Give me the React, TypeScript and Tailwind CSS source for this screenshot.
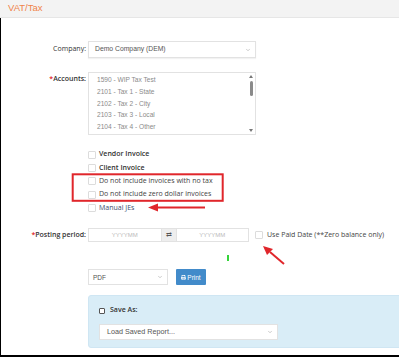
import { ChevronDown } from "lucide-react";
import { FaPrint } from "react-icons/fa";

const accounts = [
  "1590 - WIP Tax Test",
  "2101 - Tax 1 - State",
  "2102 - Tax 2 - City",
  "2103 - Tax 3 - Local",
  "2104 - Tax 4 - Other",
];

const options = [
  { label: "Vendor Invoice", cls: "font-semibold text-[#333]" },
  { label: "Client Invoice", cls: "font-semibold text-[#333]" },
  { label: "Do not include invoices with no tax", cls: "text-[#444]" },
  { label: "Do not include zero dollar invoices", cls: "text-[#444]" },
  { label: "Manual JEs", cls: "text-[#3d4c6e]" },
];

function Box({ className = "" }: { className?: string }) {
  return (
    <span
      className={`block shrink-0 rounded-[1px] border border-[#dcdcdc] bg-white ${className}`}
    />
  );
}

function Label({ children, required }: { children: string; required?: boolean }) {
  return (
    <div className="pr-[2px] text-right text-[7px] text-[#333]">
      {required && <span className="text-[#e0262b]">*</span>}
      {children}
    </div>
  );
}

export default function App() {
  return (
    <div className="relative h-[357px] w-[399px] overflow-hidden bg-white font-['Open_Sans',sans-serif]">
      <div className="flex h-[18px] items-start border-b border-[#e6e6e6] bg-[#f3f3f3] px-[8px] pt-[1px] font-['Liberation_Sans',sans-serif] text-[9.5px] text-[#f0834a]">
        VAT/Tax
      </div>

      <div className="flex h-[339px] flex-col border-b-2 border-l border-black">
        {/* company */}
        <div className="mt-[23px] grid grid-cols-[87px_168px] items-center">
          <Label>Company:</Label>
          <div className="flex h-[17px] items-center justify-between border border-[#e2e2e2] bg-white pl-[6px] pr-[4px] font-['Liberation_Sans',sans-serif] text-[6.8px] text-[#555] shadow-[0_1px_1px_rgba(0,0,0,0.05)]">
            Demo Company (DEM)
            <ChevronDown size={6} className="text-[#999]" />
          </div>
        </div>

        {/* accounts */}
        <div className="mt-[14px] grid grid-cols-[87px_168px] items-start">
          <div className="pt-[2px] font-semibold">
            <Label required>Accounts:</Label>
          </div>
          <div className="relative flex h-[63px] flex-col border border-[#e2e2e2] bg-white pl-[8px] pt-[1.5px] font-['Liberation_Sans',sans-serif] text-[6.6px] text-[#8a8a8a]">
            {accounts.map((a) => (
              <div key={a} className="flex h-[11.6px] items-center">
                {a}
              </div>
            ))}
            <div className="absolute right-[1px] top-0 flex h-full w-[6px] flex-col items-center justify-between py-[2px]">
              <span className="h-0 w-0 border-x-[2px] border-b-[3px] border-x-transparent border-b-[#777]" />
              <span className="mb-auto mt-[3px] h-[15px] w-[3px] rounded-full bg-[#8a8a8a]" />
              <span className="h-0 w-0 border-x-[2px] border-t-[3px] border-x-transparent border-t-[#777]" />
            </div>
          </div>
        </div>

        {/* checkboxes */}
        <div className="mt-[13px] flex flex-col pl-[87px]">
          {options.map((o) => (
            <div key={o.label} className="flex h-[13.3px] items-center gap-[3px]">
              <Box className="h-[8px] w-[8px]" />
              <span className={`text-[7px] ${o.cls}`}>{o.label}</span>
            </div>
          ))}
        </div>

        {/* posting period */}
        <div className="mt-[14px] flex items-center">
          <div className="w-[87px] font-semibold">
            <Label required>Posting period:</Label>
          </div>
          <div className="flex h-[14px] w-[161px] font-['Liberation_Sans',sans-serif] text-[6px] text-[#bbb]">
            <div className="flex flex-1 items-center justify-center border border-[#e2e2e2]">YYYYMM</div>
            <div className="flex w-[14px] items-center justify-center border-y border-[#e2e2e2] bg-[#eee] text-[7px] text-[#555]">
              ⇄
            </div>
            <div className="flex flex-1 items-center justify-center border border-[#e2e2e2]">YYYYMM</div>
          </div>
          <Box className="ml-[6px] h-[8px] w-[8px]" />
          <span className="ml-[4px] text-[7px] text-[#444]">Use Paid Date (**Zero balance only)</span>
        </div>

        {/* loading mark */}
        <div className="mt-[13px] ml-[226px] h-[6px] w-[2px] bg-[#35d43a]" />

        {/* export */}
        <div className="mt-[8px] flex items-center pl-[87px]">
          <div className="flex h-[16px] w-[80px] items-center justify-between border border-[#e2e2e2] pl-[4px] pr-[4px] font-['Liberation_Sans',sans-serif] text-[6.5px] text-[#555]">
            PDF
            <ChevronDown size={6} className="text-[#999]" />
          </div>
          <button className="ml-[8px] flex h-[16px] w-[30px] items-center justify-center gap-[1px] rounded-[1px] bg-[#428bca] font-['Liberation_Sans',sans-serif] text-[6.5px] text-white">
            <FaPrint size={5} />
            Print
          </button>
        </div>

        {/* saved report panel */}
        <div className="mt-[10px] ml-[87px] flex h-[53px] w-[330px] flex-col rounded-[3px] border border-[#cfe6f3] bg-[#d9edf7] pl-[10px]">
          <div className="mt-[9px] flex items-center gap-[5px]">
            <span className="block h-[6px] w-[6px] rounded-[1px] border border-[#555] bg-white" />
            <span className="text-[7px] font-semibold text-[#333]">Save As:</span>
          </div>
          <div className="mt-[8px] flex h-[16px] w-[179px] items-center justify-between border border-[#e2e2e2] bg-white pl-[7px] pr-[4px] font-['Liberation_Sans',sans-serif] text-[7.2px] text-[#555]">
            Load Saved Report...
            <ChevronDown size={6} className="text-[#999]" />
          </div>
        </div>
      </div>

      {/* annotations */}
      <svg className="pointer-events-none absolute inset-0" width="399" height="357">
        <rect x="72.7" y="174.3" width="150" height="26.5" fill="none" stroke="#e0262b" strokeWidth="2" />
        <line x1="205" y1="207.5" x2="156" y2="207.5" stroke="#e0262b" strokeWidth="2" />
        <polygon points="148,207.5 158,203.5 158,211.5" fill="#e0262b" />
        <line x1="284" y1="264" x2="270" y2="252" stroke="#e0262b" strokeWidth="2" />
        <polygon points="263,246 273,249 267,255" fill="#e0262b" />
      </svg>
    </div>
  );
}
